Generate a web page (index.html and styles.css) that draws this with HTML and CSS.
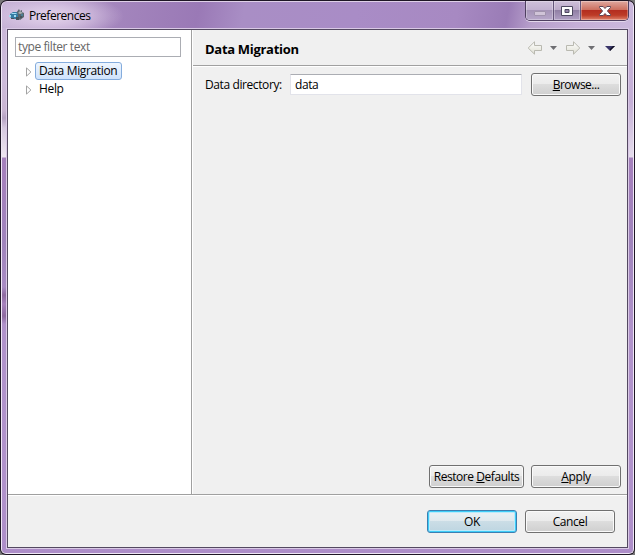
FILE: index.html
```html
<!DOCTYPE html>
<html lang="en">
<head>
<meta charset="utf-8">
<title>Preferences</title>
<link rel="stylesheet" href="styles.css">
</head>
<body>
<div class="window">
  <div class="frame">
    <header class="titlebar">
      <svg class="app-icon" width="16" height="16" viewBox="0 0 16 16">
        <path d="M7 6l3-4 1 2 2-1v2l2 1v4l-4 3-4-3z" fill="#59656c"/>
        <path d="M9 6l2-2 3 2-3 1z" fill="#a7b0b2"/>
        <path d="M1 7l3-2h4l1 3v4H3l-2-2z" fill="#347ca3"/>
        <path d="M3 6h4l1 1H2z" fill="#9fdcf2"/>
        <path d="M0 8h2v2H0zM5 8h2v2H5z" fill="#a4ddf0"/>
        <path d="M2 11h3v1H2zM7 10h3v3H7zM11 9h2v2h-2z" fill="#46545c"/>
        <path d="M12 7h2v2h-2z" fill="#4b7f96"/>
      </svg>
      <span class="title">Preferences</span>
      <div class="caption">
        <span class="cap min"><svg width="12" height="6" viewBox="0 0 12 6"><rect x=".5" y=".5" width="11" height="4" rx=".5" fill="#d0c4d8" stroke="#a093ad"/></svg></span>
        <span class="cap max"><svg width="12" height="10" viewBox="0 0 12 10"><path d="M.5.5h11v9H.5zM4 3.5v3h4v-3z" fill="#fff" fill-rule="evenodd" stroke="#4d4860"/></svg></span>
        <span class="cap close"><svg width="12" height="10" viewBox="0 0 12 10"><path d="M.5.5h3.7L6 2.5 7.8.5h3.7v1L8.4 5l3.1 3.5v1H7.8L6 7.5l-1.8 2H.5v-1L3.6 5 .5 1.5z" fill="#fff" stroke="#5d4657"/></svg></span>
      </div>
    </header>
    <div class="client">
      <div class="main">
        <aside class="sidebar">
          <div class="filter">type filter text</div>
          <div class="row"><svg width="6" height="10" viewBox="0 0 6 10"><path d="M.5.9L4.9 5 .5 9.1z" fill="#fff" stroke="#a3a3a3"/></svg><span class="item selected">Data Migration</span></div>
          <div class="row"><svg width="6" height="10" viewBox="0 0 6 10"><path d="M.5.9L4.9 5 .5 9.1z" fill="#fff" stroke="#a3a3a3"/></svg><span class="item">Help</span></div>
        </aside>
        <section class="page">
          <div class="page-head">
            <h1>Data Migration</h1>
            <svg class="nav" width="90" height="14" viewBox="0 0 90 14">
              <defs><linearGradient id="arrow" x1="0" y1="0" x2="0" y2="1"><stop offset="0" stop-color="#fff"/><stop offset="1" stop-color="#deded2"/></linearGradient></defs>
              <path d="M.2 7L6.5 .8V4.5H13.5V9.5H6.5V13.2z" fill="url(#arrow)" stroke="#b9b9b0"/>
              <path d="M22 5h7l-3.5 4z" fill="#6e6e72"/>
              <path d="M51.8 7L45.5 .8V4.5H38.5V9.5H45.5V13.2z" fill="url(#arrow)" stroke="#b9b9b0"/>
              <path d="M60 5h7l-3.5 4z" fill="#6e6e72"/>
              <path d="M77 5h10l-5 5z" fill="#393569"/><path d="M87 5l-5 5v-2l3-3z" fill="#101020"/>
            </svg>
          </div>
          <div class="page-body">
            <div class="field">
              <label>Data directory:</label>
              <div class="input">data</div>
              <button class="btn browse"><u>B</u>rowse...</button>
            </div>
            <div class="page-actions">
              <button class="btn restore">Restore <u>D</u>efaults</button>
              <button class="btn"><u>A</u>pply</button>
            </div>
          </div>
        </section>
      </div>
      <footer class="footer">
        <button class="btn primary">OK</button>
        <button class="btn">Cancel</button>
      </footer>
    </div>
  </div>
</div>
</body>
</html>
```
FILE: styles.css
```css
* { box-sizing: border-box; }
body {
  margin: 0;
  background: #777;
  font: 12px/16px "Open Sans", "Noto Sans", sans-serif;
  letter-spacing: -0.4px;
  color: #000;
  overflow: hidden;
}
.window {
  width: 635px;
  height: 555px;
  padding: 1px;
  background: #1e1625;
  border-radius: 7px 7px 6px 6px;
}
.frame {
  display: flex;
  flex-direction: column;
  height: 553px;
  padding: 0 5px 5px;
  border: 1px solid #efe7f5;
  border-top-color: #dfd0e8;
  border-radius: 6px 6px 5px 5px;
  background:
    linear-gradient(#c9b5d8 0, #cdbbda 80px, #c9b5d2 108px, #b5a2c2 116px, #d5c8df 126px, #eee6f0 155px, transparent 156px) 0 0 / 5px 100% no-repeat,
    linear-gradient(#cbb8dc 0, #c5afd7 100px, #e5dcec 155px, transparent 156px) 100% 0 / 5px 100% no-repeat,
    linear-gradient(transparent 285px, #8e6ba0 293px, #a682bd 302px, #8e6ba0 314px, transparent 322px) 0 0 / 5px 100% no-repeat,
    linear-gradient(#a57fbb 0, #a581bd 180px, #a084bc 240px, #b193cb 330px, #b092cb 490px, #ad8dc8 100%);
}
.titlebar {
  display: flex;
  align-items: flex-start;
  height: 26px;
  margin: 0 -5px;
  border-radius: 5px 5px 0 0;
  background:
    radial-gradient(ellipse 70px 22px at 52px 14px, rgba(239,227,243,.8), rgba(229,213,237,.6) 45%, rgba(220,200,230,0)),
    linear-gradient(100deg, #c4b0d4 0, #b79dcb 60px, #a486bd 110px, #9a79b6 195px, #a98ec5 240px, #a98cc6 350px, #a789c2 450px, #9a7cb6 500px, #b79fcb 525px, #c5afd7 570px, #cbb8dc 100%);
}
.app-icon { margin: 5px 0 0 7px; }
.title { margin: 6px 0 0 4px; white-space: nowrap; letter-spacing: -.5px; }
.caption {
  display: flex;
  width: 104px;
  height: 20px;
  margin: -1px 4px 0 auto;
  border: 1px solid #4e3f60;
  border-top: 0;
  border-radius: 0 0 5px 5px;
  box-shadow: 0 1px 0 #e4d8ec;
  overflow: hidden;
}
.cap {
  display: flex;
  align-items: center;
  justify-content: center;
  width: 27px;
  border-right: 1px solid #65557a;
  background: linear-gradient(#cfc0da 0, #bcaac9 45%, #9180a5 50%, #b09fc4 100%);
  box-shadow: inset 0 0 0 1px rgba(255,255,255,.3);
}
.cap.min { width: 28px; padding-top: 6px; background: linear-gradient(#cfc0da 0, #c2b1d0 45%, #a594b7 50%, #b7a7ca 100%); }
.cap.close {
  flex: 1;
  border: 0;
  background: linear-gradient(#dfa8a0 0, #cd7161 45%, #b42e20 50%, #bd3c27 75%, #df836c 100%);
}
.client {
  display: flex;
  flex: 1;
  flex-direction: column;
  border: 1px solid #544961;
  outline: 1px solid #d9c9e5;
  margin: 1px 0 0;
  background: #f0f0f0;
}
.main { display: flex; height: 464px; }
.sidebar {
  width: 184px;
  padding: 7px 0 0 7px;
  background: #fff;
  border-right: 1px solid #a0a0a0;
}
.filter {
  width: 166px;
  height: 20px;
  margin-bottom: 5px;
  padding: 1px 2px;
  border: 1px solid #abadb3;
  color: #666;
}
.row { display: flex; align-items: center; height: 18px; padding-left: 11px; }
.row svg { margin-top: 2px; }
.item { height: 18px; margin-left: 3px; padding: 0 3px; border: 1px solid transparent; white-space: nowrap; letter-spacing: -.35px; }
.selected {
  width: 87px;
  border-color: #84acdd;
  border-radius: 3px;
  background: linear-gradient(#eff6fe, #cfe3fc);
}
.page { display: flex; flex: 1; flex-direction: column; border-left: 1px solid #fff; }
.page-head {
  display: flex;
  height: 37px;
  padding: 11px 9px 0 12px;
  border-bottom: 1px solid #fff;
  box-shadow: inset 0 -1px 0 #a0a0a0;
}
h1 { margin: 0; font-size: 13px; line-height: 16px; font-weight: 700; letter-spacing: -.3px; }
.nav { margin: 0 0 0 auto; overflow: visible; }
.page-body {
  display: flex;
  flex: 1;
  flex-direction: column;
  justify-content: space-between;
  padding: 6px 6px 6px 12px;
}
.field { display: flex; align-items: center; }
.field label { width: 85px; padding-top: 1px; white-space: nowrap; }
.input {
  width: 232px;
  height: 21px;
  margin-right: 9px;
  padding: 2px 4px;
  border: 1px solid #e2e3ea;
  border-top-color: #abadb3;
  border-radius: 1px;
  background: #fff;
}
.btn {
  flex: none;
  width: 90px;
  height: 23px;
  margin: 0;
  padding: 0;
  border: 1px solid #707070;
  border-radius: 3px;
  background: linear-gradient(#f2f2f2 0, #ebebeb 48%, #dddddd 50%, #cfcfcf 100%);
  box-shadow: inset 0 0 0 1px #fafafa;
  color: #000;
  font: inherit;
  letter-spacing: inherit;
  white-space: nowrap;
}
.btn u { text-underline-offset: 1px; }
.browse { letter-spacing: -.5px; }
.restore { width: 95px; letter-spacing: -.45px; }
.page-actions { display: flex; justify-content: flex-end; gap: 7px; }
.footer {
  display: flex;
  flex: 1;
  justify-content: flex-end;
  gap: 8px;
  padding: 15px 12px 0 0;
  border-top: 1px solid #a0a0a0;
  box-shadow: inset 0 1px 0 #fff;
}
.footer .btn { margin-bottom: 14px; }
.primary {
  border-color: #3c7fb1;
  background: linear-gradient(#eaf1f5 0, #dfe9ee 48%, #cbdde6 50%, #bdd5e1 100%);
  box-shadow: inset 0 0 0 1px #3dcdf8, inset 0 0 0 2px #b9eafb;
}
```
